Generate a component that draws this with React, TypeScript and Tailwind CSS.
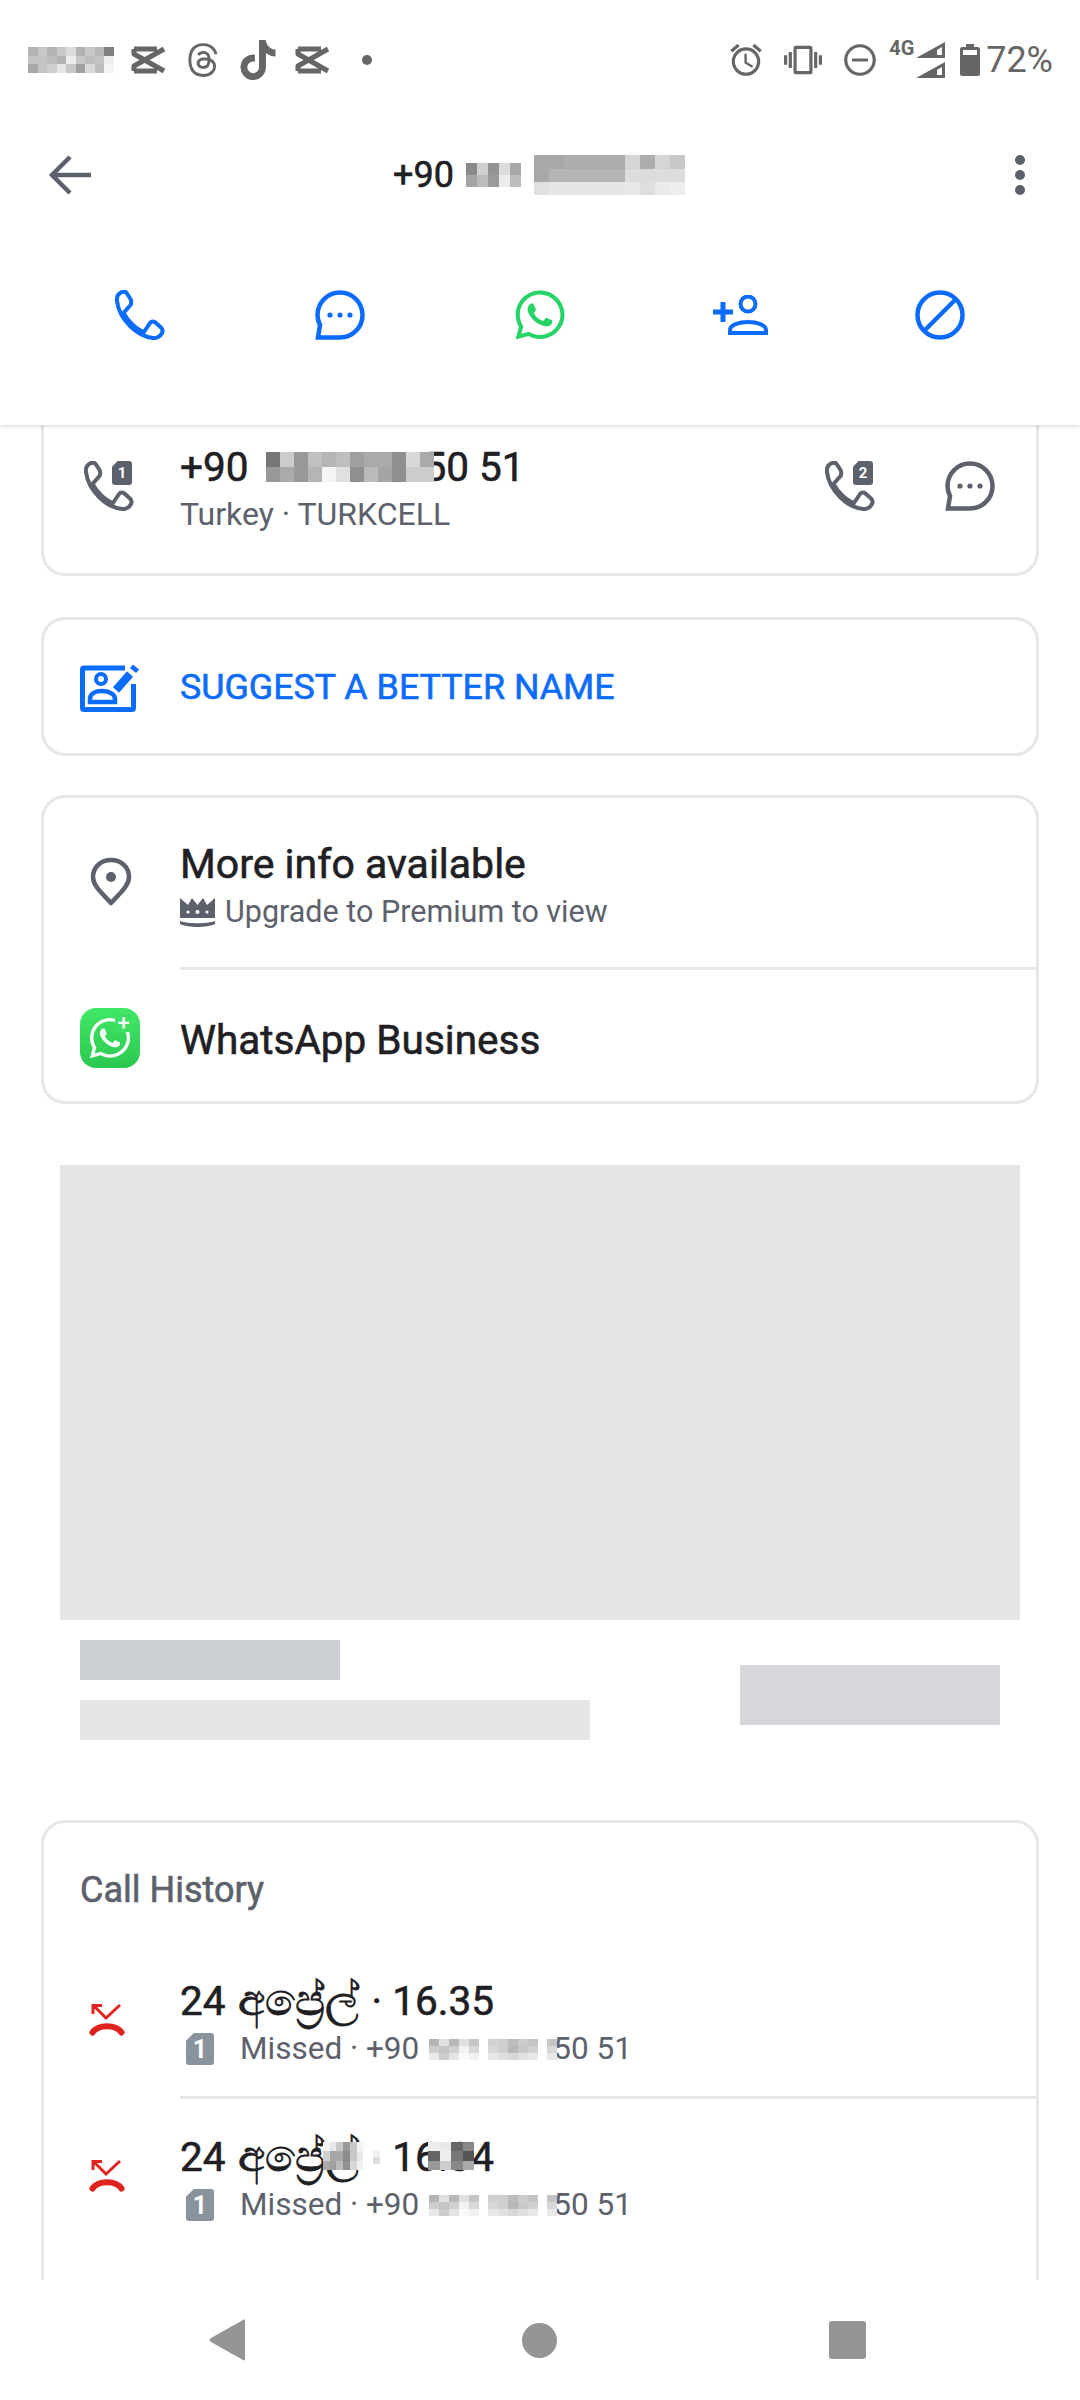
import { FaThreads, FaTiktok, FaWhatsapp } from "react-icons/fa6";
import { MdOutlineAlarm, MdOutlineVibration, MdOutlineDoNotDisturbOn } from "react-icons/md";

const blue = "#0b6bfb";
const slate = "#5c616b";

// the labels sit between regular and medium
const semi = "font-normal [-webkit-text-stroke:0.6px_currentColor]";

// pixelated (blurred out) bits of the screenshot
const Mosaic = ({ rows, cell, cellH }: { rows: string[][]; cell: number; cellH?: number }) => {
  const h = cellH ?? cell;
  const cols = rows[0].length;
  return (
    <svg width={cols * cell} height={rows.length * h} shapeRendering="crispEdges" className="relative z-10 shrink-0">
      {rows.map((row, y) =>
        row.map((c, x) => <rect key={`${x}-${y}`} x={x * cell} y={y * h} width={cell} height={h} fill={c} />)
      )}
    </svg>
  );
};

const PhoneIcon = ({ color, size = 50 }: { color: string; size?: number }) => (
  <svg width={size} height={size} viewBox="0 0 50 50" fill="none" stroke={color} strokeWidth="4" strokeLinejoin="round">
    <path d="M6 2.5C3 4 1.5 7 2 11C3 20 8 29 15 36C21 42 29 47 38 48C42 48.5 45.5 46 47 43C48 41 47.5 39 46 37.5L41 33C39 31 36.5 31 35 33L29 42C23 40 13 32 8.5 23L15.5 15C16.5 13 16.5 11 15.5 9L12 3.5C10.5 1 8 1.5 6 2.5Z" />
  </svg>
);

const ChatIcon = ({ color }: { color: string }) => (
  <svg width="50" height="50" viewBox="0 0 50 50" fill="none">
    <path d="M25 2.5C12.5 2.5 2.5 12.5 2.5 25C2.5 29 3.5 32 5 35L3 47.5H25C37.5 47.5 47.5 37.5 47.5 25C47.5 12.5 37.5 2.5 25 2.5Z" stroke={color} strokeWidth="4.5" />
    <circle cx="15" cy="25" r="2.6" fill={color} />
    <circle cx="25" cy="25" r="2.6" fill={color} />
    <circle cx="35" cy="25" r="2.6" fill={color} />
  </svg>
);

const AddPersonIcon = () => (
  <svg width="55" height="40" viewBox="0 0 55 40" fill="none" stroke={blue}>
    <path d="M0 17H20M10 7V27" strokeWidth="5" />
    <circle cx="35" cy="9" r="7.5" strokeWidth="4" />
    <path d="M17 38V35C17 30 26 27 35 27C44 27 53 30 53 35V38Z" strokeWidth="4" />
  </svg>
);

const BlockIcon = () => (
  <svg width="50" height="50" viewBox="0 0 50 50" fill="none" stroke={blue} strokeWidth="4.5">
    <circle cx="25" cy="25" r="22.5" />
    <path d="M9 41L41 9" />
  </svg>
);

const SuggestIcon = () => (
  <svg width="60" height="48" viewBox="0 0 60 48" fill="none" stroke={blue}>
    <path d="M45 4H4C3 4 2.5 4.5 2.5 5.5V44C2.5 45 3 45.5 4 45.5H52C53 45.5 53.5 45 53.5 44V20" strokeWidth="5" />
    <circle cx="21" cy="15" r="5" strokeWidth="4" />
    <path d="M10 38V35C10 30 15 27 22 27C29 27 35 30 35 35V38Z" strokeWidth="4.5" />
    <path d="M36 26L50 10" strokeWidth="8" />
    <path d="M53 6.5L56 3" strokeWidth="8" />
  </svg>
);

const PinIcon = () => (
  <svg width="42" height="50" viewBox="0 0 42 50" fill="none">
    <path d="M21 46C12 36 3 29 3 20C3 10 11 3 21 3C31 3 39 10 39 20C39 29 30 36 21 46Z" stroke={slate} strokeWidth="4.5" strokeLinejoin="round" />
    <circle cx="21" cy="20" r="5" fill={slate} />
  </svg>
);

const CrownIcon = () => (
  <svg width="35" height="30" viewBox="0 0 35 30" className="shrink-0">
    <path d="M0 1L8 8L12 1L17.5 8L23 1L27 8L35 1V21H0Z" fill={slate} />
    <circle cx="8" cy="15" r="1.6" fill="#fff" />
    <circle cx="17.5" cy="15" r="2" fill="#fff" />
    <circle cx="27" cy="15" r="1.6" fill="#fff" />
    <path d="M0 24C8 27 27 27 35 24V27C27 31 8 31 0 27Z" fill={slate} />
  </svg>
);

const MissedIcon = () => (
  <svg width="36" height="34" viewBox="0 0 36 34" fill="none" stroke="#e0231e">
    <path d="M31 2L17 15L5 3M4 11V2.5H13" strokeWidth="3" />
    <path d="M3.5 29.5C9 21 27 21 32.5 29.5" strokeWidth="6" strokeLinecap="round" />
  </svg>
);

const CapCutIcon = () => (
  <svg width="35" height="28" viewBox="0 0 35 28" fill="none" stroke="#666" strokeWidth="5" strokeLinejoin="round">
    <path d="M3 3H26M3 3V8L33 25M3 25H26M3 25V20L33 3" />
  </svg>
);

const SignalIcon = () => (
  <svg width="29" height="36" viewBox="0 0 29 36" fill="#666">
    <path d="M0 16L29 0V16H0ZM21 13H26V5L21 8Z" fillRule="evenodd" />
    <path d="M0 36L29 20V36H0ZM21 33H26V25L21 28Z" fillRule="evenodd" />
  </svg>
);

const BatteryIcon = () => (
  <svg width="20" height="32" viewBox="0 0 20 32" fill="#666">
    <path d="M6 0H14V3H18C19 3 20 4 20 5V30C20 31 19 32 18 32H2C1 32 0 31 0 30V5C0 4 1 3 2 3H6ZM3 6V11H17V6Z" fillRule="evenodd" />
  </svg>
);

const Sim = ({ n, bg, className }: { n: string; bg: string; className: string }) => (
  <div
    className={`flex items-center justify-center rounded-[3px] font-bold leading-none text-white [clip-path:polygon(28%_0,100%_0,100%_100%,0_100%,0_24%)] ${className}`}
    style={{ backgroundColor: bg }}
  >
    {n}
  </div>
);

const SimPhone = ({ n }: { n: string }) => (
  <div className="relative h-[50px] w-[50px]">
    <PhoneIcon color={slate} />
    <Sim n={n} bg={slate} className="absolute right-[2px] top-0 h-[24px] w-[20px] text-[15px]" />
  </div>
);

const WhatsAppTile = () => (
  <div className="relative flex h-[60px] w-[60px] items-center justify-center rounded-[16px] bg-gradient-to-b from-[#41e868] to-[#2ac84e]">
    <FaWhatsapp size={46} color="#fff" />
    <div className="absolute right-[7px] top-[6px] flex h-[18px] w-[18px] items-center justify-center bg-[#3ce062] text-[22px] font-medium leading-none text-white">
      +
    </div>
  </div>
);

const titleA = [
  ["#8a8a8a", "#cfcfcf", "#949494", "#dcdcdc", "#a8a8a8"],
  ["#a5a5a5", "#bcbcbc", "#9a9a9a", "#ececec", "#bdbdbd"],
];
const titleB = [
  ["#a8a8a8", "#a8a8a8", "#adadad", "#adadad", "#adadad", "#adadad", "#d5d5d5", "#adadad", "#d5d5d5", "#c8c8c8"],
  ["#a8a8a8", "#b5b5b5", "#b5b5b5", "#b5b5b5", "#b5b5b5", "#b5b5b5", "#dcdcdc", "#dcdcdc", "#dcdcdc", "#dcdcdc"],
  ["#e0e0e0", "#e5e5e5", "#e5e5e5", "#e5e5e5", "#e5e5e5", "#e5e5e5", "#e8e8e8", "#dedede", "#eaeaea", "#ededed"],
];
const statusMosaic = [
  ["#b3b3b3", "#c8c8c8", "#b3b3b3", "#c8c8c8", "#dcdcdc", "#b3b3b3", "#c8c8c8", "#b8b8b8", "#808080"],
  ["#c4c4c4", "#c4c4c4", "#bdbdbd", "#b3b3b3", "#ececec", "#c8c8c8", "#bdbdbd", "#c4c4c4", "#efefef"],
  ["#a8a8a8", "#c4c4c4", "#cfcfcf", "#e6e6e6", "#c8c8c8", "#a0a0a0", "#d8d8d8", "#bdbdbd", "#f4f4f4"],
];
const numberMosaic = [
  ["#777777", "#cccccc", "#999999", "#c0c0c0", "#b5b5b5", "#bfbfbf", "#a0a0a0", "#aaaaaa", "#aaaaaa", "#8f8f8f", "#d8d8d8", "#aaaaaa"],
  ["#999999", "#aaaaaa", "#999999", "#b5b5b5", "#f5f5f5", "#e0e0e0", "#8f8f8f", "#bbbbbb", "#a5a5a5", "#8f8f8f", "#cccccc", "#cccccc"],
];
const missedA = [
  ["#b5b5b5", "#e0e0e0", "#b8b8b8", "#e0e0e0", "#c5c5c5"],
  ["#cccccc", "#c5c5c5", "#d0d0d0", "#f2f2f2", "#d8d8d8"],
  ["#e8e8e8", "#cccccc", "#e4e4e4", "#fafafa", "#f0f0f0"],
];
const missedB = [
  ["#d0d0d0", "#cfcfcf", "#bdbdbd", "#cccccc", "#c5c5c5"],
  ["#d8d8d8", "#cfcfcf", "#b8b8b8", "#c8c8c8", "#d0d0d0"],
  ["#e8e8e8", "#e0e0e0", "#d8d8d8", "#e0e0e0", "#e8e8e8"],
];
const missedC = [["#c5c5c5"], ["#d8d8d8"], ["#e8e8e8"]];
const timeA = [
  ["#f4f4f4", "#e8e8e8", "#c8c8c8", "#989898", "#c8c8c8", "#f4f4f4"],
  ["#d0d0d0", "#a8a8a8", "#a8a8a8", "#8c8c8c", "#c8c8c8", "#e8e8e8"],
  ["#aaaaaa", "#a0a0a0", "#bcbcbc", "#909090", "#d8d8d8", "#f0f0f0"],
];
const timeB = [
  ["#ececec", "#e8e8e8", "#666666", "#888888"],
  ["#666666", "#eeeeee", "#777777", "#555555"],
  ["#999999", "#cccccc", "#888888", "#aaaaaa"],
];
const timeDot = [["#f0f0f0"], ["#dddddd"]];

const Card = ({ className = "", children }: { className?: string; children: React.ReactNode }) => (
  <div className={`border-[3px] border-[#e6e7e9] bg-white ${className}`}>{children}</div>
);

const HistoryRow = ({ time, blurred }: { time: string; blurred?: boolean }) => (
  <div className="flex h-[153px]">
    <div className="flex w-[136px] shrink-0 justify-center pr-[10px] pt-[60px]">
      <div className="h-[34px]"><MissedIcon /></div>
    </div>
    <div className="min-w-0 flex-1 pt-[33px]">
      <div className={`relative h-[50px] whitespace-pre text-[40.5px] leading-[50px] text-[#1f2024] ${semi}`}>
        24 <span className="ml-[2px] mr-[3px] text-[44px] font-normal leading-none [-webkit-text-stroke:0.9px_#1f2024]">අප්‍රේල්</span> · {time}
        {blurred && (
          <>
            <div className="absolute left-[143px] top-[10px]"><Mosaic rows={timeA} cell={6.7} cellH={9.4} /></div>
            <div className="absolute left-[193px] top-[18px]"><Mosaic rows={timeDot} cell={7} /></div>
            <div className="absolute left-[248px] top-[10px]"><Mosaic rows={timeB} cell={11.5} cellH={9.4} /></div>
          </>
        )}
      </div>
      <div className="mt-[7px] flex h-[32px] items-center text-[31.5px] leading-none text-[#5c616b]">
        <Sim n="1" bg="#8a929c" className="ml-[6px] h-[32px] w-[28px] text-[25px]" />
        <span className="ml-[26px] whitespace-pre">Missed · +90</span>
        <div className="ml-[10px] flex gap-[9px]">
          <Mosaic rows={missedA} cell={10} cellH={7} />
          <Mosaic rows={missedB} cell={10} cellH={7} />
          <Mosaic rows={missedC} cell={10} cellH={7} />
        </div>
        <span className="-ml-[4px] whitespace-pre">50 51</span>
      </div>
    </div>
  </div>
);

export default function App() {
  return (
    <div className="flex h-[2400px] w-[1080px] flex-col overflow-hidden bg-white font-['Roboto','Noto_Sans',sans-serif]">
      <header className="relative z-20 h-[425px] shrink-0 bg-white shadow-[0_2px_4px_rgba(0,0,0,0.12)]">
        <div className="flex h-[120px] items-center pl-[28px] pr-[27px] text-[#666]">
          <Mosaic rows={statusMosaic} cell={9.5} cellH={8.5} />
          <div className="ml-[17px] flex items-center gap-[17px]">
            <CapCutIcon />
            <FaThreads size={36} className="ml-[2px]" />
            <FaTiktok size={40} />
            <CapCutIcon />
          </div>
          <div className="ml-[32px] h-[10px] w-[10px] rounded-full bg-[#666]" />
          <div className="ml-auto flex items-center">
            <MdOutlineAlarm size={38} />
            <MdOutlineVibration size={38} className="ml-[19px]" />
            <MdOutlineDoNotDisturbOn size={38} className="ml-[19px]" />
            <div className="relative ml-[8px] h-[36px] w-[58px]">
              <span className="absolute left-[2px] top-[-4px] text-[20px] font-bold leading-[20px]">4G</span>
              <div className="absolute right-0 top-0">
                <SignalIcon />
              </div>
            </div>
            <div className="ml-[15px]">
              <BatteryIcon />
            </div>
            <span className="ml-[6px] text-[36px] leading-none">72%</span>
          </div>
        </div>

        <div className="flex h-[110px] items-center pl-[48px] pr-[55px]">
          <svg width="44" height="40" viewBox="0 0 44 40" fill="none" stroke={slate} strokeWidth="4.5">
            <path d="M22 2L4 20L22 38M4 20H43" />
          </svg>
          <div className={`ml-[301px] flex items-center text-[36px] leading-none text-[#1f2024] ${semi}`}>
            <span className="mr-[12px]">+90</span>
            <Mosaic rows={titleA} cell={11} cellH={12} />
            <div className="ml-[13px]">
              <Mosaic rows={titleB} cell={15.1} cellH={13.5} />
            </div>
          </div>
          <div className="ml-auto flex flex-col gap-[5px]">
            <div className="h-[10px] w-[10px] rounded-full bg-[#5c616b]" />
            <div className="h-[10px] w-[10px] rounded-full bg-[#5c616b]" />
            <div className="h-[10px] w-[10px] rounded-full bg-[#5c616b]" />
          </div>
        </div>

        <div className="grid grid-cols-5 px-[40px] pt-[60px]">
          <div className="flex justify-center"><PhoneIcon color={blue} /></div>
          <div className="flex justify-center"><ChatIcon color={blue} /></div>
          <div className="flex h-[50px] items-center justify-center"><FaWhatsapp size={56} color="#25d366" /></div>
          <div className="flex items-center justify-center"><AddPersonIcon /></div>
          <div className="flex justify-center"><BlockIcon /></div>
        </div>
      </header>

      <main className="flex-1 overflow-hidden px-[41px]">
        <Card className="h-[151px] rounded-b-[24px] border-t-0">
          <div className="flex items-start pt-[24px]">
            <div className="w-[136px] shrink-0 pl-[40px] pt-[12px]">
              <SimPhone n="1" />
            </div>
            <div className="flex-1">
              <div className={`flex h-[36px] items-center whitespace-pre text-[40.5px] leading-none text-[#1f2024] ${semi}`}>
                <span>+90</span>
                <div className="ml-[17px]"><Mosaic rows={numberMosaic} cell={14} cellH={15} /></div>
                <span className="-ml-[10px]">50 51</span>
              </div>
              <div className="mt-[9px] text-[32px] leading-[40px] text-[#5c616b]">Turkey · TURKCELL</div>
            </div>
            <div className="flex items-center pr-[41px] pt-[12px]">
              <SimPhone n="2" />
              <div className="ml-[70px]"><ChatIcon color={slate} /></div>
            </div>
          </div>
        </Card>

        <Card className="mt-[41px] flex h-[139px] items-center rounded-[24px] pt-[3px]">
          <div className="w-[136px] shrink-0 pl-[36px]"><SuggestIcon /></div>
          <span className={`text-[35.8px] leading-none text-[#0b6bfb] ${semi}`}>SUGGEST A BETTER NAME</span>
        </Card>

        <Card className="mt-[39px] h-[309px] rounded-[24px]">
          <div className="flex h-[169px] items-center pt-[5px]">
            <div className="flex w-[136px] shrink-0 justify-center pb-[6px] pr-[3px]"><PinIcon /></div>
            <div>
              <div className={`text-[41px] leading-[46px] text-[#1f2024] ${semi}`}>More info available</div>
              <div className="mt-[7px] flex items-center text-[30.5px] leading-[36px] text-[#5c616b]">
                <CrownIcon />
                <span className="ml-[10px]">Upgrade to Premium to view</span>
              </div>
            </div>
          </div>
          <div className="ml-[136px] h-[3px] bg-[#e6e7e9]" />
          <div className="flex h-[131px] items-center pt-[10px]">
            <div className="flex w-[136px] shrink-0 justify-center pb-[5px] pr-[5px]"><WhatsAppTile /></div>
            <span className={`text-[40.5px] leading-none text-[#1f2024] ${semi}`}>WhatsApp Business</span>
          </div>
        </Card>

        <div className="mx-[19px] mt-[61px] h-[455px] bg-[#e5e6e8]" />
        <div className="flex items-center justify-between px-[39px] pt-[20px]">
          <div className="flex flex-col gap-[20px]">
            <div className="h-[40px] w-[260px] bg-[#cbced2]" />
            <div className="h-[40px] w-[510px] bg-[#e5e6e8]" />
          </div>
          <div className="mt-[10px] h-[60px] w-[260px] bg-[#d6d7da]" />
        </div>

        <Card className="mt-[80px] h-[480px] rounded-[24px]">
          <div className={`h-[120px] pl-[36px] pt-[49px] text-[36px] leading-none text-[#5c616b] ${semi}`}>Call History</div>
          <HistoryRow time="16.35" />
          <div className="ml-[136px] h-[3px] bg-[#e6e7e9]" />
          <HistoryRow time="16.34" blurred />
        </Card>
      </main>

      <nav className="relative z-20 flex h-[120px] shrink-0 items-center bg-white pl-[209px]">
        <svg width="36" height="42" viewBox="0 0 36 42" fill="#959595"><path d="M34 1C35 0 36 1 36 2V40C36 41 35 42 34 41L2 23C0 22 0 20 2 19Z" /></svg>
        <div className="ml-[277px] h-[35px] w-[35px] rounded-full bg-[#959595]" />
        <div className="ml-[272px] h-[38px] w-[37px] rounded-[3px] bg-[#959595]" />
      </nav>
    </div>
  );
}
